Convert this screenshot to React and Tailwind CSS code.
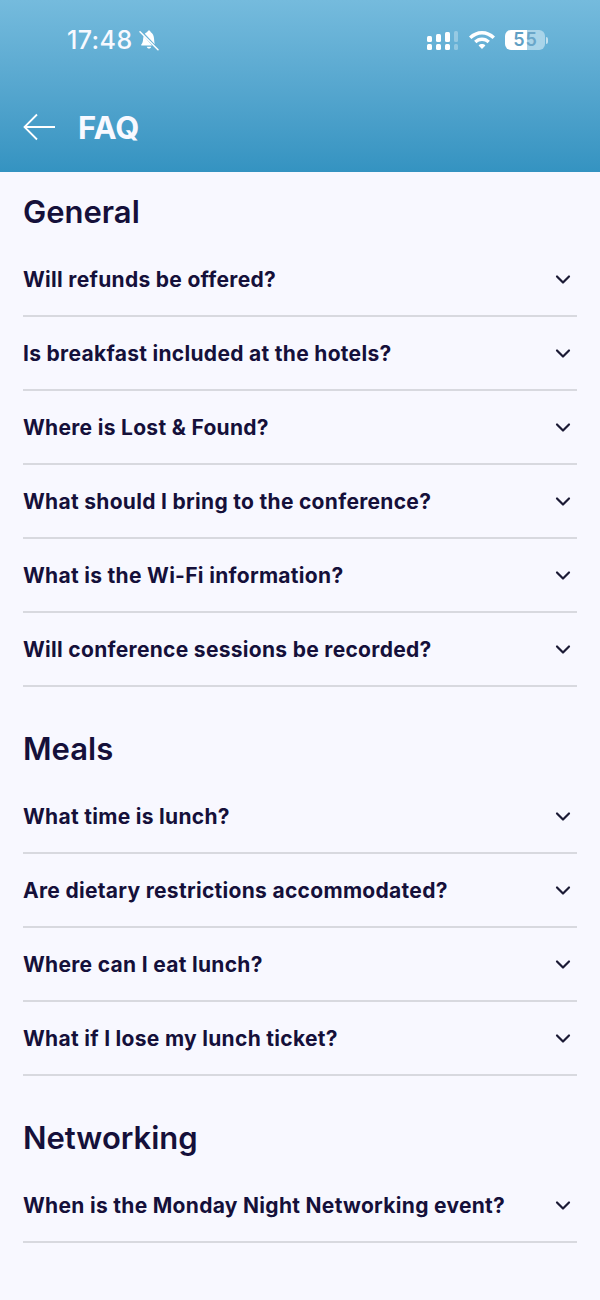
const SECTIONS = [
  {
    title: 'General',
    questions: [
      'Will refunds be offered?',
      'Is breakfast included at the hotels?',
      'Where is Lost & Found?',
      'What should I bring to the conference?',
      'What is the Wi-Fi information?',
      'Will conference sessions be recorded?',
    ],
  },
  {
    title: 'Meals',
    questions: [
      'What time is lunch?',
      'Are dietary restrictions accommodated?',
      'Where can I eat lunch?',
      'What if I lose my lunch ticket?',
    ],
  },
  {
    title: 'Networking',
    questions: ['When is the Monday Night Networking event?'],
  },
];

function BellOff() {
  return (
    <svg width="22" height="22" viewBox="0 0 22 22" fill="none">
      <path d="M11 1.500c-.9 0-1.500.6-1.600 1.400-1.100.4-2 1-2.600 1.900l10 10.400c-.4-1.300-.6-3-.7-4.900-.2-3.500-1.300-6-3.500-7.300C12.500 2.100 11.900 1.500 11 1.500z" fill="white" />
      <path d="M5.700 7c-.3 1-.5 2.100-.6 3.300-.1 2.300-.7 3.900-1.800 5.200-.3.400 0 1 .5 1h10.300z" fill="white" />
      <path d="M8.800 17.700h4.400c-.2 1-1.100 1.800-2.200 1.800s-2-.8-2.200-1.800z" fill="white" />
      <path d="M2 2.800l18 18" stroke="white" strokeWidth="1.500" strokeLinecap="round" />
    </svg>
  );
}

function SignalBars() {
  return (
    <svg width="31" height="19" viewBox="0 0 31 19" fill="white">
      <rect x="0" y="5" width="5" height="6" rx="1.500" />
      <rect x="0" y="13" width="5" height="6" rx="1.500" />
      <rect x="9" y="3" width="5" height="8" rx="1.500" />
      <rect x="9" y="13" width="5" height="6" rx="1.500" />
      <rect x="18" y="1" width="5" height="10" rx="1.500" />
      <rect x="18" y="13" width="5" height="6" rx="1.500" />
      <rect x="27" y="0" width="4" height="11" rx="1.500" opacity="0.3" />
      <rect x="27" y="13" width="4" height="6" rx="1.500" opacity="0.3" />
    </svg>
  );
}

function StatusBar() {
  return (
    <div className="flex h-[80px] items-center justify-between pl-[67px] pr-[52px]">
      <div className="flex items-center gap-[5px]">
        <span className="text-[25px] leading-none font-medium tracking-[0.4px] text-[#f8f9ff]">17:48</span>
        <BellOff />
      </div>
      <div className="flex items-center">
        <SignalBars />
        <svg className="ml-[10px]" width="28" height="22" viewBox="0 0 28 22" fill="white">
          <path d="M14 2C9 2 4.900 4 1 7.400l2.400 2.600C6.400 7.200 10.200 5.400 14 5.400s7.600 1.800 10.600 4.600L27 7.400C23.100 4 19 2 14 2z" />
          <path d="M14 8.500c-2.900 0-5.700 1.200-7.900 3.300l2.400 2.500c1.500-1.400 3.400-2.300 5.500-2.300s4 .9 5.500 2.300l2.400-2.500C19.700 9.700 16.900 8.500 14 8.500z" />
          <path d="M14 15c-1.300 0-2.500.5-3.400 1.400L14 20l3.400-3.600C16.500 15.500 15.300 15 14 15z" />
        </svg>
        <div className="ml-[9px] flex items-center">
          <div className="flex h-[20px] w-[40px] items-center justify-center rounded-[6px] bg-[linear-gradient(90deg,#ffffff_0,#ffffff_55%,#a9d4e9_55%,#a9d4e9_100%)]">
            <span className="text-[18px] leading-none font-semibold text-[#5f9fc4]">5</span>
            <span className="ml-[1px] text-[18px] leading-none font-semibold text-[#6aa6c9]">5</span>
          </div>
          <span className="ml-[1px] h-[7px] w-[2px] rounded-r-full bg-white/60" />
        </div>
      </div>
    </div>
  );
}

function Header() {
  return (
    <header className="h-[172px] bg-gradient-to-b from-[#75bbdd] to-[#3493c1]">
      <StatusBar />
      <div className="flex h-[92px] items-center pl-[23px]">
        <svg className="mt-[2px]" width="32" height="28" viewBox="0 0 32 28" fill="none" stroke="white" strokeWidth="1.800">
          <path d="M32 14H1.500M14 1.500L1.500 14 14 26.500" />
        </svg>
        <h1 className="ml-[23px] mt-[3px] text-[31px] leading-none font-bold text-[#f8f9ff]">FAQ</h1>
      </div>
    </header>
  );
}

function FaqRow({ question }) {
  return (
    <div className="flex h-[74px] items-center justify-between border-b-2 border-[#d8d9df] pr-[5px]">
      <span className="mt-[1px] text-[21px] leading-none font-bold tracking-[0.3px] text-[#15103a]">{question}</span>
      <svg className="mt-[2px]" width="18" height="18" viewBox="0 0 18 18" fill="none" stroke="#1b1a35" strokeWidth="2.200" strokeLinecap="round" strokeLinejoin="round">
        <path d="M3 5.500L9 11.500l6-6" />
      </svg>
    </div>
  );
}

export default function App() {
  return (
    <div className="h-[1300px] overflow-hidden bg-[#f8f8ff] font-['Inter',sans-serif]">
      <Header />
      <main className="flex flex-col gap-[43px] px-[23px] pt-[21px]">
        {SECTIONS.map((section) => (
          <section key={section.title}>
            <h2 className="mb-[14px] flex h-[36px] items-center text-[31px] leading-none font-semibold text-[#15103a]">{section.title}</h2>
            {section.questions.map((question) => (
              <FaqRow key={question} question={question} />
            ))}
          </section>
        ))}
      </main>
    </div>
  );
}
